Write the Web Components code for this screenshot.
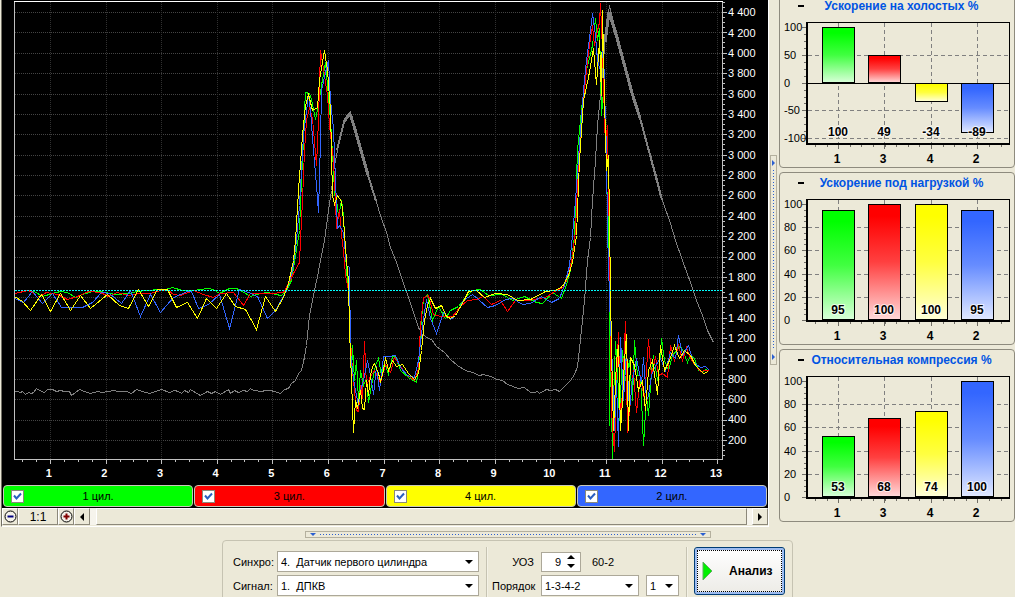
<!DOCTYPE html>
<html lang="ru">
<head>
<meta charset="utf-8">
<title>Анализ двигателя</title>
<style>
  html, body { margin: 0; height: 100%; }
  body { background: #ece9d8; color: #000; font: 11px/14px "Liberation Sans", Arial, sans-serif; overflow: hidden; }
</style>
</head>
<body>
<engine-app></engine-app>
<script>
const SERIES = {
  gray: "14,391 17,391 20,392 22,391 25,394 28,392 31,393 33,392 36,388 39,390 44,392 47,389 52,389 56,391 60,390 64,391 69,391 71,395 79,389 84,391 90,393 97,391 102,392 113,390 118,391 126,391 131,393 136,389 142,391 149,393 155,391 161,389 169,392 174,390 178,391 181,393 184,390 188,392 190,389 193,391 200,395 207,391 211,393 215,391 220,394 228,389 230,393 234,390 238,392 243,390 247,391 250,388 253,390 261,391 265,390 270,390 274,391 280,393 284,389 288,388 291,383 295,380 298,373 301,370 303,362 306,345 309,315 312,300 315,285 317,276 320,260 324,240 328,210 331,190 334,165 337,150 340,137 343,124 346,117 349,113 351,114 354,124 358,140 362,155 367,172 373,192 380,215 386,232 390,247 396,262 402,280 408,297 414,315 418,327 422,334 428,338 431,339 436,346 440,349 444,352 450,359 457,365 465,370 472,372 479,375 483,374 490,376 497,379 502,380 507,384 518,388 524,387 530,392 534,392 537,391 539,393 546,389 550,390 555,389 559,391 565,385 570,380 574,374 577,366 579,348 582,320 584,300 587,260 590,237 592,200 595,160 597,125 600,95 603,60 605,35 607,20 609,5 612,18 617,35 625,65 632,92 640,118 648,147 655,172 662,200 670,223 675,240 682,260 690,282 696,300 702,315 707,330 713,342",
  green: "14,293 28,290 34,291 42,296 52,293 60,291 67,292 75,297 82,294 92,291 100,291 115,294 128,293 137,291 146,290 160,289 165,289 172,287 182,290 193,290 207,288 213,289 219,293 229,288 236,288 242,291 250,296 260,293 268,292 275,294 281,295 286,290 291,280 294,262 299,230 301,180 303,140 304,110 305,92 309,93 311,99 315,119 318,105 321,85 325,62 327,85 330,120 333,170 334,193 337,205 338,217 341,200 343,215 344,235 346,270 348,290 350,330 351,375 352,345 354,380 356,360 358,400 360,370 363,385 366,378 368,402 371,385 375,365 378,358 381,375 384,362 388,374 392,356 395,356 400,370 408,377 416,382 418,370 420,330 423,298 427,294 432,320 438,306 445,318 450,310 458,306 466,296 472,290 480,289 488,295 502,294 512,300 524,296 536,302 542,303 552,292 561,298 566,284 570,270 574,235 577,150 582,100 586,70 592,45 595,18 597,40 599,28 601,115 603,90 605,110 606,180 608,225 609,310 609,425 610,350 612,459 613,400 615,341 617,370 619,420 622,350 625,380 629,360 632,400 634,340 637,375 640,375 643,445 646,395 648,415 651,370 653,355 657,380 659,365 661,338 664,360 668,370 672,355 676,350 680,345 683,352 687,362 690,355 694,358 698,370 702,371 706,369 708,371",
  red: "14,293 28,290 32,292 37,297 46,292 57,294 67,299 77,296 88,291 100,292 108,296 117,292 128,295 140,293 150,293 160,290 168,290 173,294 180,295 193,290 203,294 213,297 220,293 233,292 243,305 250,293 262,293 270,293 283,292 287,285 293,273 299,262 300,240 302,200 304,150 306,120 309,107 312,118 316,165 318,120 320,50 324,75 327,95 329,125 333,160 335,200 336,228 339,210 341,235 343,250 345,275 348,290 350,340 352,370 356,410 358,411 360,385 362,398 364,341 366,385 370,376 374,370 380,382 385,364 390,372 394,357 400,366 406,374 414,380 418,368 420,325 423,297 428,295 433,314 440,316 452,316 460,306 467,300 476,299 483,296 491,304 500,300 507,311 515,300 527,300 545,297 556,290 563,287 568,275 572,255 575,230 578,160 582,110 586,70 589,45 592,25 594,45 597,30 599,22 600,3 602,50 604,120 605,145 607,125 608,190 609,240 610,330 611,410 613,440 614,451 616,380 618,332 620,425 623,370 625,321 627,432 630,400 633,370 636,412 640,375 644,400 648,339 651,375 655,356 658,375 662,373 667,377 670,345 674,360 678,345 682,360 686,347 690,358 695,365 700,371 705,370 708,370",
  yellow: "14,296 22,301 30,310 41,294 50,311 60,293 70,310 80,295 90,308 107,294 119,305 128,308 138,289 148,306 157,289 167,289 176,307 187,302 197,318 206,298 216,308 226,293 235,306 245,309 256,329 265,296 275,311 283,297 288,283 293,260 295,240 298,190 302,135 305,105 308,94 312,110 317,107 319,80 324,50 327,70 330,110 332,195 334,204 337,195 341,201 343,220 346,260 348,280 349,330 351,380 353,432 355,400 357,408 360,390 362,408 364,409 366,380 368,395 370,375 372,366 374,363 378,373 380,381 383,370 385,357 388,370 392,360 396,366 402,364 408,373 414,379 418,373 421,350 424,320 427,305 430,298 435,308 441,305 446,316 450,318 455,315 463,301 468,291 476,290 484,297 495,293 507,294 517,300 530,299 545,291 555,290 562,286 568,275 572,262 576,235 579,160 583,100 588,77 593,48 596,84 599,40 601,95 602,10 604,100 606,170 608,155 609,220 610,290 611,350 613,430 616,360 618,345 620,430 622,400 624,360 626,334 628,430 630,357 634,365 638,390 642,380 645,410 648,370 652,360 657,394 660,345 664,370 669,360 674,345 679,358 684,350 690,355 695,365 703,373 708,371",
  blue: "14,298 23,302 32,291 42,303 52,293 61,307 82,307 92,302 101,292 109,293 121,303 130,290 140,316 150,294 160,312 173,297 187,291 191,291 198,308 208,304 219,294 229,328 239,289 248,292 257,296 267,318 275,310 286,290 292,270 296,240 299,205 303,135 308,95 310,110 313,150 316,185 318,212 320,140 321,90 325,72 328,60 330,100 333,128 335,180 337,228 339,225 343,232 346,265 349,267 350,350 352,370 354,385 358,405 360,390 363,380 367,360 370,375 373,394 376,366 379,390 383,356 388,356 395,355 400,367 407,375 414,377 418,360 422,325 426,299 430,318 436,333 443,312 450,319 455,315 463,300 472,294 478,299 487,307 495,305 505,299 512,298 522,304 530,303 541,296 551,302 559,298 564,285 569,265 572,235 575,200 580,130 583,90 586,60 590,30 592,13 595,35 597,60 600,70 603,45 604,90 606,150 607,235 608,260 609,300 612,370 614,430 616,380 618,446 620,337 623,400 626,350 629,410 632,380 636,358 641,383 643,357 646,400 648,395 651,375 655,365 660,358 665,370 670,352 675,358 678,335 682,355 688,345 693,362 700,367 705,366 709,370"
};
const COLORS = { green: "#00ff00", red: "#ff0000", yellow: "#ffff00", blue: "#3366ff", gray: "#808080" };

function attach(el, html) { el.attachShadow({ mode: "open" }).innerHTML = html; }
const line = (x1, y1, x2, y2, extra = "") => `<line x1="${x1}" y1="${y1}" x2="${x2}" y2="${y2}" ${extra}/>`;
/* Mixes a #rrggbb colour with white; t = 0 keeps the colour, t = 1 gives white */
const tint = (hex, t) => "rgb(" + [1, 3, 5].map(i => { const n = parseInt(hex.substr(i, 2), 16); return Math.round(n + (255 - n) * t); }).join(",") + ")";

/* Speed trace: dotted grid, one polyline per cylinder, and the raw rpm curve */
customElements.define("rpm-chart", class extends HTMLElement {
  connectedCallback() {
    let rows = "", cols = "", ticks = "", yl = "", xl = "";
    for (let i = 0; i < 22; i++) {
      const y = Math.round(12 + i * 20.38) + .5;
      rows += line(15, y, 722, y);
      ticks += line(723, y, 727, y);
      for (let j = 1; j < 4; j++) { const m = Math.floor(y + j * 5.1) + .5; if (m < 458) ticks += line(723, m, 725, m); }
      const v = String(4400 - i * 200);
      yl += `<span>${v.length > 3 ? v[0] + " " + v.slice(1) : v}</span>`;
    }
    ticks += line(723, 2.5, 725, 2.5) + line(723, 7.5, 725, 7.5);
    for (let i = 0; i < 13; i++) {
      const x = Math.round(50 + i * 55.6) + .5;
      cols += line(x, 2, x, 459);
      ticks += line(x, 460, x, 464);
      for (let j = -2; j < 2; j++) { const m = Math.floor(x + j * 13.9) + .5; if (j && m < 722) ticks += line(m, 460, m, 462); }
      xl += `<span>${i + 1}</span>`;
    }
    const poly = k => `<polyline points="${SERIES[k]}" stroke="${COLORS[k]}" transform="translate(.5 .5)"/>`;
    attach(this, `<style>
      :host { display: grid; grid-template-columns: 1fr 40px; background: #000; color: #fff; }
      svg { display: block; width: 100%; height: 464px; }
      polyline { fill: none; vector-effect: non-scaling-stroke; }
      .y { display: flex; flex-direction: column; padding: 2px 0 14px; }
      .y span { flex: 1; display: flex; align-items: center; }
      .x { grid-column: 1 / 3; display: flex; height: 17px; padding: 0 24px 4px 19px; font-weight: bold; align-items: center; }
      .x span { flex: 1; text-align: center; }
    </style>
    <svg viewBox="2 0 726 464" preserveAspectRatio="none" shape-rendering="crispEdges" role="img" aria-label="Обороты">
      <g stroke="#444" stroke-dasharray="1 1">${rows}</g>
      <g stroke="#303030" stroke-dasharray="1 1">${cols}</g>
      ${poly("gray")}
      <g stroke="#808080" fill="none" stroke-width="3"><polyline points="344,122 347,117 350,114 354,126 360,147 368,175"/><polyline points="605,42 609,12 617,38 625,67 632,93 640,118"/></g>
      <g stroke="#808080" fill="none" stroke-width="2"><polyline points="337,150 344,122"/><polyline points="368,175 376,201"/><polyline points="640,118 650,155 662,200"/></g>
      ${poly("green")}${poly("red")}${poly("blue")}${poly("yellow")}
      ${line(15, 290.5, 722, 290.5, 'stroke="#00ffff" stroke-dasharray="2 1"')}
      <g stroke="#c0c0c0">${ticks}${line(14.5, 1, 14.5, 460)}${line(14, 459.5, 723, 459.5)}${line(722.5, 1, 722.5, 460)}</g>
      ${line(14, 1.5, 723, 1.5, 'stroke="#fff"')}
    </svg>
    <div class="y">${yl}</div><div class="x">${xl}</div>`);
  }
});

customElements.define("cylinder-toggle", class extends HTMLElement {
  connectedCallback() {
    attach(this, `<style>
      :host { display: block; flex: 1; }
      label { display: grid; grid-template-columns: 1fr; align-items: center; box-sizing: border-box; height: 22px; border: 1px solid #c8c8b8; border-radius: 4px; background: ${COLORS[this.getAttribute("color")]}; color: #000; }
      label > * { grid-area: 1 / 1; }
      input { appearance: none; width: 13px; height: 13px; margin: 0 0 0 7px; border: 1px solid #8a8a7c; background: #fff; box-sizing: border-box; }
      svg { width: 9px; height: 9px; margin-left: 9px; visibility: hidden; pointer-events: none; }
      input:checked + svg { visibility: visible; }
      span { text-align: center; }
    </style>
    <label><input type="checkbox" checked><svg viewBox="0 0 9 9"><path d="M1 3.5 3.5 6.5 8 1.5" fill="none" stroke="#2a5fc0" stroke-width="2"/></svg><span><slot></slot></span></label>`);
  }
});

customElements.define("zoom-bar", class extends HTMLElement {
  connectedCallback() {
    const lens = (c, v) => `<svg width="13" height="13" viewBox="0 0 13 13"><circle cx="6.5" cy="6.5" r="5.5" fill="#f4f1e8" stroke="#000"/><path d="M3.5 6.5h6${v ? "M6.5 3.5v6" : ""}" stroke="${c}" stroke-width="2"/></svg>`;
    attach(this, `<style>
      :host { display: flex; height: 17px; padding-bottom: 1px; }
      button { font: 12px "Liberation Sans", sans-serif; display: grid; place-items: center; box-sizing: border-box; width: 16px; margin: 0; padding: 0; border: 1px solid; border-color: #fff #8c887a #8c887a #fff; background: #ece9d8; color: #000; }
      .fit { width: 40px; }
      .track { flex: 1; display: flex; padding: 0 5px 0 6px; background: #f6f4ec; }
      .thumb { flex: 1; border: 1px solid; border-color: #fff #8c887a #8c887a #fff; background: #ece9d8; }
    </style>
    <button aria-label="Уменьшить">${lens("#000080")}</button><button class="fit">1:1</button><button aria-label="Увеличить">${lens("#800000", 1)}</button>
    <button aria-label="Влево"><svg width="4" height="8" viewBox="0 0 4 8"><path d="M4 0v8L0 4z"/></svg></button>
    <div class="track"><div class="thumb"></div></div>
    <button aria-label="Вправо"><svg width="4" height="8" viewBox="0 0 4 8"><path d="M0 0v8l4-4z"/></svg></button>`);
  }
});

customElements.define("split-grip", class extends HTMLElement {
  connectedCallback() {
    const v = this.hasAttribute("vertical");
    const arrow = v ? `<svg width="3" height="6" viewBox="0 0 3 6"><path d="M0 0v6l3-3z"/></svg>` : `<svg width="6" height="3" viewBox="0 0 6 3"><path d="M0 0h6l-3 3z"/></svg>`;
    attach(this, `<style>
      :host { display: flex; box-sizing: border-box; align-items: center; justify-content: space-between; border: 1px solid #b4b09e; gap: 4px;
        ${v ? "flex-direction: column; width: 7px; height: 40.5%; padding: 4px 0;" : "width: 40%; height: 7px; padding: 0 4px;"} }
      svg { fill: #2a5fd0; flex: none; }
      i { flex: 1; ${v ? "width: 1px; background: repeating-linear-gradient(#2a5fd0 0 1px, transparent 1px 3px)" : "height: 1px; background: repeating-linear-gradient(90deg, #2a5fd0 0 1px, transparent 1px 3px)"}; }
    </style>${arrow}<i></i>${arrow}`);
  }
});

/* Bars for the four cylinders in firing order 1-3-4-2 */
customElements.define("bar-panel", class extends HTMLElement {
  connectedCallback() {
    const vals = this.getAttribute("values").split(",").map(Number);
    const signed = this.hasAttribute("signed");
    const scale = signed ? [100, 50, 0, -50, -100] : [100, 80, 60, 40, 20, 0];
    const Y = v => signed ? Math.floor(83 - v * .555) : Math.round(143 - v * 1.16);
    const xs = [838, 884, 931, 977], names = [1, 3, 4, 2], cols = ["green", "red", "yellow", "blue"];
    let defs = "", s = "", ticks = "", labels = "";
    scale.forEach((v, i) => {
      const y = Y(v) + .5;
      if (v !== 100 && v !== 0) s += line(808, y, 1009, y, 'stroke="#808080" stroke-dasharray="4 3"');
      ticks += line(802, y, 806, y);
      const n = scale[i + 1];
      if (n !== undefined) for (let j = 1; j < 4; j++) { const m = Math.round(Y(v) + (Y(n) - Y(v)) * j / 4) + .5; ticks += line(804, m, 806, m); }
      labels += `<text x="784" y="${Y(v) + 4}">${v}</text>`;
    });
    xs.forEach(x => {
      s += line(x + .5, 23, x + .5, 143, 'stroke="#808080" stroke-dasharray="4 3"');
      ticks += line(x + .5, 145, x + .5, 149);
    });
    for (let x = 815; x < 1009; x += 11.6) { const m = Math.round(x) + .5; ticks += line(m, 145, m, 147); }
    vals.forEach((v, i) => {
      const c = COLORS[cols[i]], a = Math.min(Y(0), Y(v)), b = Math.max(Y(0), Y(v));
      defs += `<linearGradient id="g${i}" x1="0" y1="0" x2="0" y2="1"><stop offset=".1" stop-color="${c}"/><stop offset=".5" stop-color="${tint(c, .25)}"/><stop offset="1" stop-color="${tint(c, .85)}"/></linearGradient>`;
      s += `<rect x="${xs[i] - 15.5}" y="${a + .5}" width="32" height="${b - a - (v > 0 ? 1 : 0)}" fill="url(#g${i})" stroke="#000"/>`;
      labels += `<text class="b halo" x="${xs[i]}" y="${signed ? 136 : 137}">${v}</text><text class="b" x="${xs[i] - 1}" y="163">${names[i]}</text>`;
    });
    attach(this, `<style>
      :host { display: block; border: 1px solid #8e8b7e; border-radius: 4px; }
      header { display: flex; align-items: center; height: 22px; padding: 0 17px 0 16px; }
      button { all: unset; width: 10px; height: 14px; display: grid; place-items: center; }
      button::before { content: ""; width: 6px; height: 2px; background: #000; margin-top: -2px; }
      h2 { flex: 1; margin: 0; font-size: 12px; line-height: 14px; text-align: center; color: #0054e3; white-space: nowrap; padding-bottom: 2px; }
      svg { display: block; width: 100%; }
      text { font-size: 11px; }
      .b { font-size: 12px; font-weight: bold; text-anchor: middle; }
      .halo { paint-order: stroke; stroke: #fff; stroke-width: 2px; stroke-opacity: .7; }
    </style>
    <header><button aria-label="Свернуть"></button><h2><slot></slot></h2></header>
    <svg viewBox="780 18 234 149"><defs>${defs}</defs><g shape-rendering="crispEdges">${s}
      ${signed ? line(806, 83.5, 1009, 83.5, 'stroke="#000"') : ""}
      <g stroke="#706e66">${ticks}</g>
      <path d="M806 22.5h204M1009.5 22v122" stroke="#000"/><path d="M807 22v122M806 144h204" stroke="#000" stroke-width="2"/></g>${labels}</svg>`);
  }
});

customElements.define("drop-list", class extends HTMLElement {
  connectedCallback() {
    attach(this, `<style>
      :host { display: grid; align-items: center; justify-items: end; }
      select, svg { grid-area: 1 / 1; }
      select { appearance: none; justify-self: stretch; height: 21px; margin: 0; padding: 0 16px 0 3px; border: 1px solid #aca899; border-radius: 0; background: #fff; color: #000; font: inherit; white-space: pre; }
      svg { margin-right: 6px; pointer-events: none; }
    </style>
    <select aria-label="${this.getAttribute("label")}"><option>${this.getAttribute("value")}</option></select>
    <svg width="8" height="4" viewBox="0 0 8 4"><path d="M0 0h8L4 4z"/></svg>`);
  }
});

customElements.define("spin-box", class extends HTMLElement {
  connectedCallback() {
    attach(this, `<style>
      :host { display: flex; box-sizing: border-box; width: 40px; height: 20px; border: 1px solid #aca899; background: #fff; }
      input { appearance: textfield; width: 20px; box-sizing: border-box; border: 0; padding: 0 1px 0 0; background: none; text-align: right; font: inherit; color: #000; }
      input::-webkit-inner-spin-button { display: none; }
      div { flex: 1; display: flex; flex-direction: column; justify-content: center; align-items: center; gap: 5px; }
      button { all: unset; display: flex; }
    </style>
    <input type="number" value="9" aria-label="УОЗ">
    <div><button aria-label="Больше"><svg width="8" height="4" viewBox="0 0 8 4"><path d="M0 4h8L4 0z"/></svg></button><button aria-label="Меньше"><svg width="8" height="4" viewBox="0 0 8 4"><path d="M0 0h8L4 4z"/></svg></button></div>`);
  }
});

customElements.define("settings-panel", class extends HTMLElement {
  connectedCallback() {
    attach(this, `<style>
      :host { display: flex; box-sizing: border-box; width: 571px; height: 64px; padding: 6px 6px 0 10px; border: 1px solid #c6c3b2; border-radius: 4px; align-items: flex-start; }
      .rows { display: grid; row-gap: 3px; align-items: center; padding-top: 4px; }
      .src { grid-template-columns: 44px 202px; }
      .ord { grid-template-columns: 42px 98px 33px; column-gap: 7px; margin-left: 4px; }
      .ord span:first-child { text-align: right; }
      hr { width: 0; height: 50px; margin: 0 0 0 7px; border: 0; border-left: 1px solid #c6c3b2; border-right: 1px solid #f4f2e6; }
      .adv { display: flex; align-items: center; gap: 11px; grid-column: 2 / 4; height: 21px; }
      .go { display: flex; align-items: center; box-sizing: border-box; width: 91px; height: 48px; margin: 0 0 0 6px; padding: 0 0 0 7px; gap: 16px; border: 1px solid #003c74; border-radius: 3px; background: linear-gradient(#fff, #ecebe6); box-shadow: inset 0 0 0 2px #9ebcf0; font: bold 12px "Liberation Sans", sans-serif; color: #000; outline: 1px dotted #000; outline-offset: -4px; }
    </style>
    <div class="rows src"><span>Синхро:</span><drop-list label="Синхро" value="4.&nbsp; Датчик первого цилиндра"></drop-list>
      <span>Сигнал:</span><drop-list label="Сигнал" value="1.&nbsp; ДПКВ"></drop-list></div>
    <hr>
    <div class="rows ord"><span>УОЗ</span><div class="adv"><spin-box></spin-box><span>60-2</span></div>
      <span>Порядок</span><drop-list label="Порядок" value="1-3-4-2"></drop-list><drop-list label="Цилиндр" value="1"></drop-list></div>
    <hr>
    <button class="go"><svg width="11" height="20" viewBox="0 0 11 20"><path d="M1 1v18l9-9z" fill="#00f000" stroke="#5fae5f"/></svg>Анализ</button>`);
  }
});

customElements.define("engine-app", class extends HTMLElement {
  connectedCallback() {
    attach(this, `<style>
      :host { display: block; }
      .top { display: flex; }
      main { flex: 1; min-width: 0; border-left: 1px solid #716f64; margin-left: 1px; border-right: 1px solid #fff; border-bottom: 1px solid #fff; }
      .channels { display: flex; gap: 1px; padding: 0 1px 1px; background: #000; }
      .grip { display: flex; align-items: center; padding: 0 2px 0 1px; height: 520px; }
      aside { width: 236px; display: flex; flex-direction: column; gap: 4px; margin-top: -5px; }
      footer { display: flex; flex-direction: column; align-items: center; gap: 2px; padding-top: 4px; }
    </style>
    <div class="top">
      <main>
        <rpm-chart></rpm-chart>
        <div class="channels">
          <cylinder-toggle color="green">1 цил.</cylinder-toggle><cylinder-toggle color="red">3 цил.</cylinder-toggle><cylinder-toggle color="yellow">4 цил.</cylinder-toggle><cylinder-toggle color="blue">2 цил.</cylinder-toggle>
        </div>
        <zoom-bar></zoom-bar>
      </main>
      <div class="grip"><split-grip vertical></split-grip></div>
      <aside>
        <bar-panel values="100,49,-34,-89" signed>Ускорение на холостых %</bar-panel>
        <bar-panel values="95,100,100,95">Ускорение под нагрузкой %</bar-panel>
        <bar-panel values="53,68,74,100">Относительная компрессия %</bar-panel>
      </aside>
    </div>
    <footer><split-grip></split-grip><settings-panel></settings-panel></footer>`);
  }
});
</script>
</body>
</html>
